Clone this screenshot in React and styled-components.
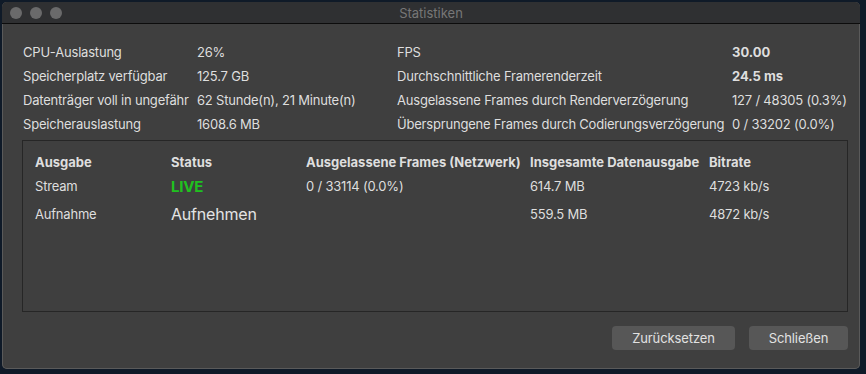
import React from 'react';
import styled, { createGlobalStyle } from 'styled-components';

const GlobalStyle = createGlobalStyle`
  html, body {
    margin: 0;
    padding: 0;
    background: #0f1a28;
    height: 374px;
    overflow: hidden;
  }
  body {
    font-family: Inter, "Liberation Sans", sans-serif;
    font-size: 13px;
    color: #dedede;
  }
`;

const Desktop = styled.div`
  padding: 2px 6px 5px 2px;
  height: 374px;
  box-sizing: border-box;
`;

const Window = styled.div`
  height: 367px;
  background: #3f3f3f;
  border-radius: 5px;
  box-shadow: inset 0 0 0 1px #5a5a5a;
  overflow: hidden;
  display: flex;
  flex-direction: column;
`;

const TitleBar = styled.div`
  height: 21px;
  background: #2f3032;
  border-bottom: 1px solid #0c0c0c;
  display: flex;
  align-items: center;
  position: relative;
  padding-left: 8px;
  gap: 8px;
`;

const Light = styled.span`
  width: 12px;
  height: 12px;
  border-radius: 50%;
  background: #6a6a6b;
`;

const Title = styled.div`
  position: absolute;
  left: 0;
  right: 0;
  text-align: center;
  color: #777;
  font-size: 13px;
  pointer-events: none;
`;

const Body = styled.div`
  flex: 1;
  padding: 16px 12px 0 20px;
  display: flex;
  flex-direction: column;
`;

const Stats = styled.div`
  display: grid;
  grid-template-columns: 174px 200px 335px 1fr;
  grid-auto-rows: 24px;
  align-items: center;
  white-space: nowrap;
  padding-left: 1px;
`;

const Cell = styled.div`
  font-weight: ${p => (p.$bold ? 700 : 400)};
  letter-spacing: ${p => (p.$bold ? '0' : '-0.2px')};
`;

const TableBox = styled.div`
  margin-top: 4px;
  height: 172px;
  border: 1px solid #262626;
  padding: 10px 12px 0 12px;
  box-sizing: border-box;
`;

const Table = styled.div`
  display: grid;
  grid-template-columns: 136px 135px 224px 179px 1fr;
  grid-template-rows: 22px 26px 30px;
  align-items: center;
  white-space: nowrap;
`;

const Head = styled.div`
  font-weight: 700;
`;

const Status = styled.div`
  font-size: ${p => (p.$live ? '15px' : '16px')};
  font-weight: ${p => (p.$live ? 700 : 400)};
  color: ${p => (p.$live ? '#1fc21f' : '#e4e4e4')};
  letter-spacing: -0.2px;
`;

const Footer = styled.div`
  display: flex;
  justify-content: flex-end;
  gap: 14px;
  padding-top: 14px;
`;

const Button = styled.button`
  height: 24px;
  width: ${p => p.$w}px;
  border: none;
  border-radius: 4px;
  background: #575757;
  color: #e2e2e2;
  font-family: inherit;
  font-size: 13px;
  letter-spacing: -0.1px;
  padding: 0;
`;

const stats = [
  ['CPU-Auslastung', '26%', 'FPS', '30.00', true],
  ['Speicherplatz verfügbar', '125.7 GB', 'Durchschnittliche Framerenderzeit', '24.5 ms', true],
  ['Datenträger voll in ungefähr', '62 Stunde(n), 21 Minute(n)', 'Ausgelassene Frames durch Renderverzögerung', '127 / 48305 (0.3%)', false],
  ['Speicherauslastung', '1608.6 MB', 'Übersprungene Frames durch Codierungsverzögerung', '0 / 33202 (0.0%)', false],
];

export default function App() {
  return (
    <Desktop>
      <GlobalStyle />
      <Window>
        <TitleBar>
          <Light />
          <Light />
          <Light />
          <Title>Statistiken</Title>
        </TitleBar>
        <Body>
          <Stats>
            {stats.map(([a, b, c, d, bold]) => (
              <React.Fragment key={a}>
                <Cell>{a}</Cell>
                <Cell>{b}</Cell>
                <Cell>{c}</Cell>
                <Cell $bold={bold}>{d}</Cell>
              </React.Fragment>
            ))}
          </Stats>
          <TableBox>
            <Table>
              <Head>Ausgabe</Head>
              <Head>Status</Head>
              <Head>Ausgelassene Frames (Netzwerk)</Head>
              <Head>Insgesamte Datenausgabe</Head>
              <Head>Bitrate</Head>

              <Cell>Stream</Cell>
              <Status $live>LIVE</Status>
              <Cell>0 / 33114 (0.0%)</Cell>
              <Cell>614.7 MB</Cell>
              <Cell>4723 kb/s</Cell>

              <Cell>Aufnahme</Cell>
              <Status>Aufnehmen</Status>
              <Cell />
              <Cell>559.5 MB</Cell>
              <Cell>4872 kb/s</Cell>
            </Table>
          </TableBox>
          <Footer>
            <Button $w={123}>Zurücksetzen</Button>
            <Button $w={99}>Schließen</Button>
          </Footer>
        </Body>
      </Window>
    </Desktop>
  );
}
